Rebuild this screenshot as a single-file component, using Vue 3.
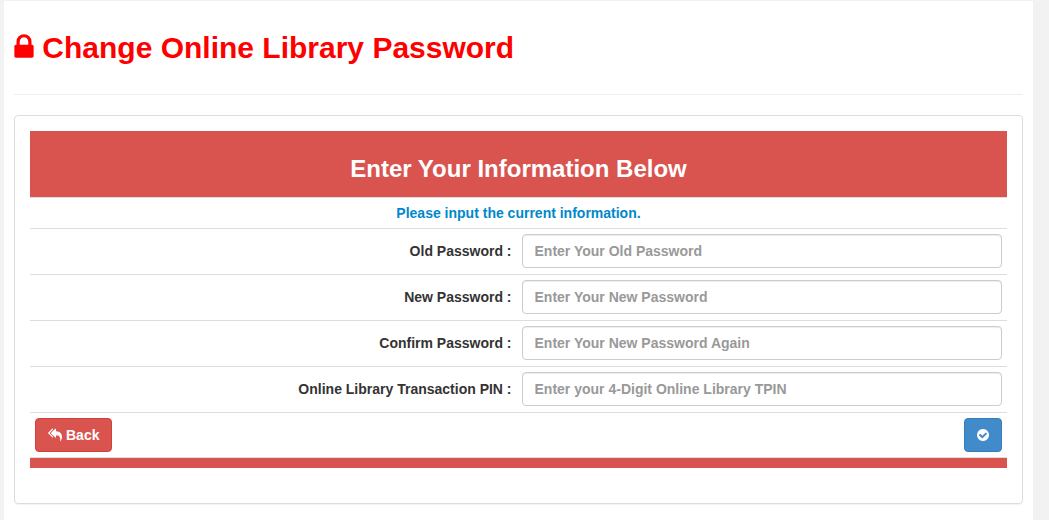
<script setup>
import { reactive } from 'vue'

const fields = [
  { id: 'old-password', label: 'Old Password :', hint: 'Enter Your Old Password' },
  { id: 'new-password', label: 'New Password :', hint: 'Enter Your New Password' },
  { id: 'confirm-password', label: 'Confirm Password :', hint: 'Enter Your New Password Again' },
  { id: 'tpin', label: 'Online Library Transaction PIN :', hint: 'Enter your 4-Digit Online Library TPIN' },
]
const values = reactive({})
</script>

<template>
  <main class="page">
    <header class="page-header">
      <h1>
        <svg class="lock" viewBox="320 0 1152 1792" aria-hidden="true">
          <path d="M640 768h512v-192q0-106-75-181t-181-75-181 75-75 181v192zm832 96v576q0 40-28 68t-68 28h-960q-40 0-68-28t-28-68v-576q0-40 28-68t68-28h32v-192q0-184 132-316t316-132 316 132 132 316v192h32q40 0 68 28t28 68z" />
        </svg>
        Change Online Library Password
      </h1>
    </header>
    <form class="panel" @submit.prevent>
      <table>
        <colgroup>
          <col class="label-col" />
          <col />
        </colgroup>
        <thead>
          <tr>
            <th colspan="2" class="banner"><h3>Enter Your Information Below</h3></th>
          </tr>
        </thead>
        <tbody>
          <tr>
            <td colspan="2" class="note">Please input the current information.</td>
          </tr>
          <tr v-for="field in fields" :key="field.id" class="field">
            <th scope="row"><label :for="field.id">{{ field.label }}</label></th>
            <td><input :id="field.id" v-model="values[field.id]" type="password" :placeholder="field.hint" /></td>
          </tr>
          <tr>
            <td colspan="2">
              <div class="actions">
                <button type="button" class="btn danger">
                  <svg class="reply" viewBox="0 0 1792 1792" aria-hidden="true">
                    <path d="M640 1082v70q0 42-39 59-13 5-25 5-27 0-45-19l-512-512q-19-19-19-45t19-45l512-512q29-31 70-14 39 17 39 59v69l-397 398q-19 19-19 45t19 45zm1152 58q0 58-17 133.500t-38.500 138-48 125-40.500 90.500l-20 40q-8 17-28 17-6 0-9-1-25-8-23-34 43-400-106-565-64-71-170.500-110.500t-267.500-52.500v251q0 42-39 59-13 5-25 5-27 0-45-19l-512-512q-19-19-19-45t19-45l512-512q29-31 70-14 39 17 39 59v262q411 28 599 221 169 173 169 509z" />
                  </svg>
                  Back
                </button>
                <button type="submit" class="btn primary" aria-label="Submit">
                  <svg class="check" viewBox="128 0 1536 1792" aria-hidden="true">
                    <path d="M1412 734q0-28-18-46l-91-90q-19-19-45-19t-45 19l-408 407-226-226q-19-19-45-19t-45 19l-91 90q-18 18-18 46 0 27 18 45l362 362q19 19 45 19 27 0 46-19l543-543q18-18 18-45zm252 162q0 209-103 385.500t-279.500 279.500-385.500 103-385.500-103-279.500-279.500-103-385.500 103-385.500 279.500-279.500 385.500-103 385.500 103 279.500 279.500 103 385.500z" />
                  </svg>
                </button>
              </div>
            </td>
          </tr>
        </tbody>
        <tfoot>
          <tr>
            <td colspan="2" class="banner-end"></td>
          </tr>
        </tfoot>
      </table>
    </form>
  </main>
</template>

<style>
body {
  background: #f2f2f2;
}
</style>

<style scoped>
* {
  box-sizing: border-box;
}
.page {
  margin: 1px 16px 0 4px;
  padding: 10px 10px 16px;
  background: #fff;
  color: #333;
  font: bold 14px/20px "Liberation Sans", Arial, sans-serif;
}
.page-header {
  margin-bottom: 20px;
  padding: 20px 0 30px;
  border-bottom: 1px solid #eee;
}
h1 {
  margin: 0;
  color: #f00;
  font-size: 30px;
  line-height: 33px;
}
svg {
  fill: currentColor;
}
.lock {
  width: 20px;
  height: 30px;
  vertical-align: -4px;
}
.panel {
  padding: 15px 15px 35px;
  border: 1px solid #ddd;
  border-radius: 4px;
  box-shadow: 0 1px 1px rgba(0, 0, 0, 0.05);
}
table {
  width: 100%;
  table-layout: fixed;
  border-spacing: 0;
}
.label-col {
  width: 49.8%;
}
th,
td {
  padding: 5px;
  border-top: 1px solid #ddd;
}
th.banner {
  border-top: 0;
  background: #d9534f;
  color: #fff;
}
h3 {
  margin: 20px 0 10px;
  font-size: 24px;
  line-height: 26px;
}
.note {
  color: #0088cc;
  text-align: center;
}
.field th {
  text-align: right;
}
.field th,
.field td {
  padding-bottom: 6px;
}
label,
input {
  display: block;
}
input {
  width: 100%;
  height: 34px;
  padding: 6px 12px;
  border: 1px solid #ccc;
  border-radius: 4px;
  background: #fff;
  box-shadow: inset 0 1px 1px rgba(0, 0, 0, 0.075);
  color: #555;
  font: inherit;
}
input::placeholder {
  color: #999;
  opacity: 1;
}
.actions {
  display: flex;
  justify-content: space-between;
}
.btn {
  display: flex;
  align-items: center;
  gap: 4px;
  height: 34px;
  padding: 6px 12px;
  border: 1px solid;
  border-radius: 4px;
  color: #fff;
  font: inherit;
}
.danger {
  border-color: #d43f3a;
  background: #d9534f;
}
.primary {
  border-color: #357ebd;
  background: #428bca;
}
.reply {
  width: 14px;
  height: 14px;
}
.check {
  width: 12px;
  height: 14px;
}
td.banner-end {
  height: 11px;
  padding: 0;
  background: #d9534f;
  background-clip: padding-box;
}
</style>
